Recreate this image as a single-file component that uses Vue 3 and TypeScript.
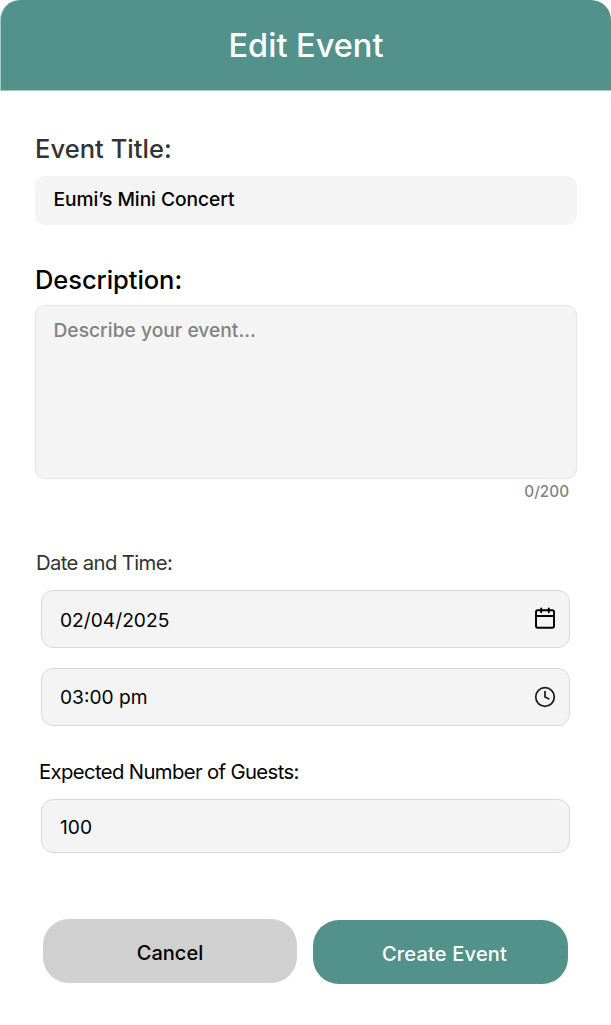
<script setup lang="ts">
import { ref } from 'vue'

const title = ref<string>('Eumi’s Mini Concert')
const description = ref<string>('')
const date = ref<string>('02/04/2025')
const time = ref<string>('03:00 pm')
const guests = ref<string>('100')
const maxLength = 200
</script>

<template>
  <main class="card">
    <header class="header"><h1>Edit Event</h1></header>
    <form class="form" @submit.prevent>
      <label class="label label-title" for="title">Event Title:</label>
      <input id="title" v-model="title" class="control title-input" type="text" />

      <label class="label label-description" for="description">Description:</label>
      <textarea
        id="description"
        v-model="description"
        class="control description-input"
        :maxlength="maxLength"
        placeholder="Describe your event..."
      ></textarea>
      <div class="counter">{{ description.length }}/{{ maxLength }}</div>

      <label class="label label-date" for="date">Date and Time:</label>
      <div class="field date-field">
        <input id="date" v-model="date" class="date-value" type="text" />
        <svg class="icon calendar" viewBox="0 0 24 24" fill="none" stroke="#000" stroke-width="2.1" stroke-linecap="round" stroke-linejoin="round">
          <rect x="2.2" y="3.6" width="19.6" height="19" rx="1.8" />
          <path d="M2.2 9.8h19.6M7.9 1.6v4.2M16.1 1.6v4.2" />
        </svg>
      </div>
      <div class="field time-field">
        <input v-model="time" class="time-value" type="text" aria-label="Time" />
        <svg class="icon" viewBox="0 0 24 24" fill="none" stroke="#1c1c1c" stroke-width="1.9" stroke-linecap="round" stroke-linejoin="round">
          <circle cx="12" cy="12" r="10.1" />
          <path d="M12 6.2V12l4 2" />
        </svg>
      </div>

      <label class="label label-guests" for="guests">Expected Number of Guests:</label>
      <div class="field guests-field">
        <input id="guests" v-model="guests" class="guests-value" type="text" />
      </div>

      <div class="actions">
        <button class="button cancel" type="button">Cancel</button>
        <button class="button create" type="submit">Create Event</button>
      </div>
    </form>
  </main>
</template>

<style>
body {
  margin: 0;
  background: #fff;
}
</style>

<style scoped>
.card,
.card input,
.card textarea,
.card button {
  font-family: Inter, 'Liberation Sans', sans-serif;
}
.card {
  height: 1025px;
  overflow: hidden;
  background: #fff;
}
.card * {
  box-sizing: border-box;
}
.header {
  height: 91px;
  padding-top: 26px;
  border-left: 1px solid #a9c9c4;
  border-bottom: 1px solid #a9c9c4;
  border-radius: 20px 20px 0 0;
  background: #53928a;
  text-align: center;
}
h1 {
  margin: 0;
  font-size: 32.5px;
  line-height: 40px;
  font-weight: 500;
  letter-spacing: 0;
  color: #fff;
}
.form {
  display: flex;
  flex-direction: column;
  padding: 43px 34px 0 35px;
}
.label {
  display: block;
  line-height: 30px;
  color: #000;
  white-space: nowrap;
}
.label-title {
  font-size: 25.5px;
  font-weight: 500;
  letter-spacing: 0.05px;
  color: #333;
}
.control {
  width: 542px;
  margin: 0;
  outline: none;
  border: 0;
  border-radius: 10px;
  background: #f4f4f4;
  color: #000;
  font-size: 19.2px;
  font-weight: 500;
  letter-spacing: -0.06px;
}
.title-input {
  height: 49px;
  margin-top: 12px;
  padding: 0 18px 3px 18.5px;
}
.label-description {
  margin-top: 40px;
  font-size: 25.5px;
  font-weight: 500;
  letter-spacing: -0.06px;
}
.description-input {
  height: 174px;
  margin-top: 10px;
  padding: 12px 17px 12px 17.5px;
  border: 1px solid #e6e6e6;
  line-height: 24px;
  letter-spacing: 0.02px;
  resize: none;
}
.description-input::placeholder {
  color: #828282;
  opacity: 1;
}
.counter {
  margin-top: 3px;
  padding-right: 8px;
  line-height: 20px;
  font-size: 15.3px;
  font-weight: 500;
  text-align: right;
  color: #828282;
}
.label-date {
  margin-top: 46px;
  padding-left: 1px;
  font-size: 20.3px;
  letter-spacing: -0.63px;
  color: #333;
}
.field {
  display: flex;
  align-items: center;
  width: 529px;
  height: 58px;
  margin: 12px 0 0 6px;
  padding: 0 13px 0 18px;
  border: 1px solid #dadada;
  border-radius: 12px;
  background: #f4f4f4;
}
.field input {
  flex: 1;
  min-width: 0;
  padding: 0;
  border: 0;
  outline: none;
  background: transparent;
  color: #000;
  font-size: 19.2px;
  line-height: 24px;
}
.date-value,
.guests-value {
  margin-top: 2px;
}
.icon {
  width: 22px;
  height: 22px;
}
.calendar {
  margin-bottom: 2px;
}
.time-field {
  margin-top: 20px;
}
.label-guests {
  margin-top: 31px;
  padding-left: 4px;
  font-size: 20.3px;
  letter-spacing: -0.63px;
}
.guests-field {
  height: 54px;
  margin-top: 12px;
}
.actions {
  display: flex;
  gap: 16px;
  margin-top: 66px;
  padding-left: 8px;
}
.button {
  height: 64px;
  border: 0;
  border-radius: 26px;
  font-size: 20px;
  font-weight: 500;
}
.cancel {
  width: 254px;
  padding: 3px 0 0;
  background: #d0d0d0;
  color: #000;
}
.create {
  width: 255px;
  margin-top: 1px;
  padding: 3px 0 0 8px;
  background: #53928a;
  color: #fff;
  letter-spacing: 0.2px;
}
</style>
